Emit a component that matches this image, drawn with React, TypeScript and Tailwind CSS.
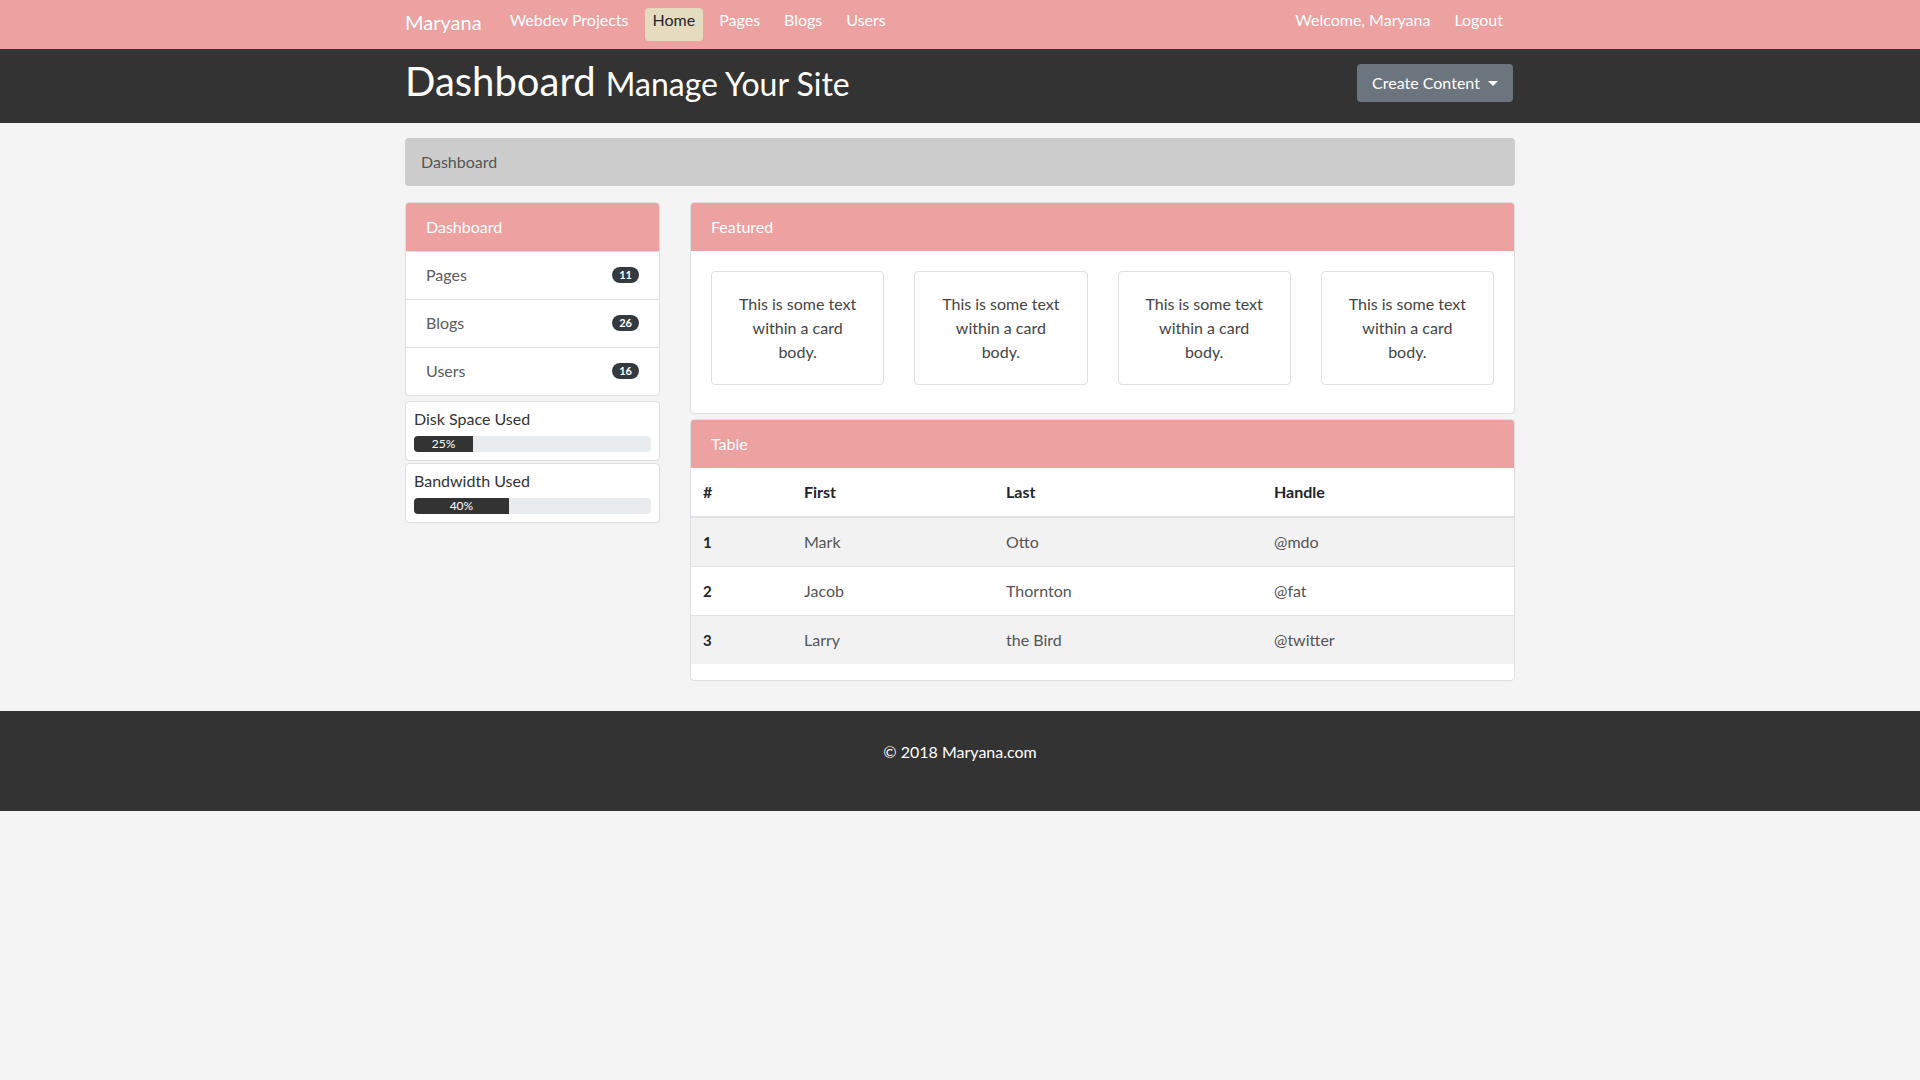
import React from 'react';

const NAV_LINKS = ['Webdev Projects', 'Home', 'Pages', 'Blogs', 'Users'];

const SIDE_ITEMS = [
  { label: 'Pages', count: 11 },
  { label: 'Blogs', count: 26 },
  { label: 'Users', count: 16 },
];

const USAGE = [
  { label: 'Disk Space Used', pct: 25 },
  { label: 'Bandwidth Used', pct: 40 },
];

const ROWS = [
  { id: 1, first: 'Mark', last: 'Otto', handle: '@mdo' },
  { id: 2, first: 'Jacob', last: 'Thornton', handle: '@fat' },
  { id: 3, first: 'Larry', last: 'the Bird', handle: '@twitter' },
];

function Navbar() {
  return (
    <nav className="h-[49px] bg-[#eda1a1]">
      <div className="w-[1140px] mx-auto px-[15px] h-full flex items-start">
        <span className="text-[20px] leading-[30px] mt-[7px] mr-4 text-white">Maryana</span>
        <ul className="flex items-start mt-[8px]">
          {NAV_LINKS.map((link) => (
            <li key={link} className="mx-1">
              <span
                className={`block px-2 pt-0 pb-[9px] leading-[24px] rounded ${
                  link === 'Home' ? 'bg-[#e5dcc0] text-[#212529]' : 'text-white'
                }`}
              >
                {link}
              </span>
            </li>
          ))}
        </ul>
        <ul className="flex items-start mt-[8px] ml-auto">
          <li className="mx-1">
            <span className="block px-2 leading-[24px] text-white">Welcome, Maryana</span>
          </li>
          <li className="mx-1">
            <span className="block px-2 leading-[24px] text-white">Logout</span>
          </li>
        </ul>
      </div>
    </nav>
  );
}

function Header() {
  return (
    <header className="h-[74px] bg-[#333333]">
      <div className="w-[1140px] mx-auto px-[15px] h-full flex items-start justify-between">
        <h1 className="mt-[8px] text-[40px] leading-[48px] text-white font-normal">
          Dashboard <small className="text-[32px]">Manage Your Site</small>
        </h1>
        <button className="mt-[15px] h-[38px] w-[156px] mr-[2px] flex items-center justify-center gap-2 rounded bg-[#6c757d] text-white text-[16px]">
          Create Content
          <span className="w-0 h-0 border-l-[5px] border-r-[5px] border-t-[5px] border-l-transparent border-r-transparent border-t-white" />
        </button>
      </div>
    </header>
  );
}

function Sidebar() {
  return (
    <aside className="w-[255px] flex flex-col">
      <div className="rounded border border-[#dfdfdf] overflow-hidden bg-white">
        <div className="h-[48px] px-5 flex items-center bg-[#eda1a1] text-white">Dashboard</div>
        {SIDE_ITEMS.map((item) => (
          <div
            key={item.label}
            className="h-[48px] pb-[2px] px-5 flex items-center justify-between border-t border-[#dfdfdf] text-[#5c5c5c]"
          >
            <span>{item.label}</span>
            <span className="h-[16px] px-[7px] rounded-full bg-[#343a40] text-white text-[11px] font-bold leading-[16px]">
              {item.count}
            </span>
          </div>
        ))}
      </div>
      {USAGE.map((u, i) => (
        <div
          key={u.label}
          className={`${i === 0 ? 'mt-[5px]' : 'mt-[2px]'} rounded border border-[#dfdfdf] bg-white px-2 pt-[5px] pb-2`}
        >
          <div className="leading-[24px] text-[#333333]">{u.label}</div>
          <div className="mt-[5px] h-[16px] rounded bg-[#e9ecef] overflow-hidden flex">
            <div
              className="h-full bg-[#333333] text-white text-[12px] leading-[16px] text-center"
              style={{ width: `${u.pct}%` }}
            >
              {u.pct}%
            </div>
          </div>
        </div>
      ))}
    </aside>
  );
}

function Featured() {
  return (
    <div className="rounded border border-[#dfdfdf] bg-white overflow-hidden">
      <div className="h-[48px] px-5 flex items-center bg-[#eda1a1] text-white">Featured</div>
      <div className="px-5 pt-5 pb-7 grid grid-cols-4 gap-[30px]">
        {[0, 1, 2, 3].map((i) => (
          <div key={i} className="rounded border border-[#dfdfdf] p-5 text-center text-[#444444] leading-[24px]">
            This is some text within a card body.
          </div>
        ))}
      </div>
    </div>
  );
}

function DataTable() {
  return (
    <div className="mt-[5px] rounded border border-[#dfdfdf] bg-white overflow-hidden pb-4">
      <div className="h-[48px] px-5 flex items-center bg-[#eda1a1] text-white">Table</div>
      <table className="w-full border-collapse text-left">
        <thead>
          <tr className="border-b-2 border-[#dee2e6]">
            <th className="w-[101px] p-3 font-bold text-[#212529] leading-[24px]">#</th>
            <th className="w-[202px] p-3 font-bold text-[#212529] leading-[24px]">First</th>
            <th className="w-[268px] p-3 font-bold text-[#212529] leading-[24px]">Last</th>
            <th className="p-3 font-bold text-[#212529] leading-[24px]">Handle</th>
          </tr>
        </thead>
        <tbody>
          {ROWS.map((r, i) => (
            <tr key={r.id} className={`border-t border-[#dee2e6] ${i % 2 === 0 ? 'bg-[#f2f2f2]' : 'bg-white'}`}>
              <td className="p-3 font-bold text-[#212529] leading-[24px] text-[15px]">{r.id}</td>
              <td className="p-3 text-[#555555] leading-[24px]">{r.first}</td>
              <td className="p-3 text-[#555555] leading-[24px]">{r.last}</td>
              <td className="p-3 text-[#555555] leading-[24px]">{r.handle}</td>
            </tr>
          ))}
        </tbody>
      </table>
    </div>
  );
}

export default function App() {
  return (
    <div className="min-h-screen bg-[#f4f4f4] text-[16px] font-['Lato',_'Open_Sans',_sans-serif]">
      <Navbar />
      <Header />
      <section className="w-[1140px] mx-auto px-[15px]">
        <div className="mt-[15px] h-[48px] px-4 flex items-center rounded bg-[#cccccc] text-[#555555]">
          Dashboard
        </div>
        <div className="mt-4 flex gap-[30px] items-start">
          <Sidebar />
          <main className="flex-1 min-w-0">
            <Featured />
            <DataTable />
          </main>
        </div>
      </section>
      <footer className="mt-[30px] h-[100px] bg-[#333333] pt-[29px] text-center text-white leading-[24px]">
        © 2018 Maryana.com
      </footer>
    </div>
  );
}
